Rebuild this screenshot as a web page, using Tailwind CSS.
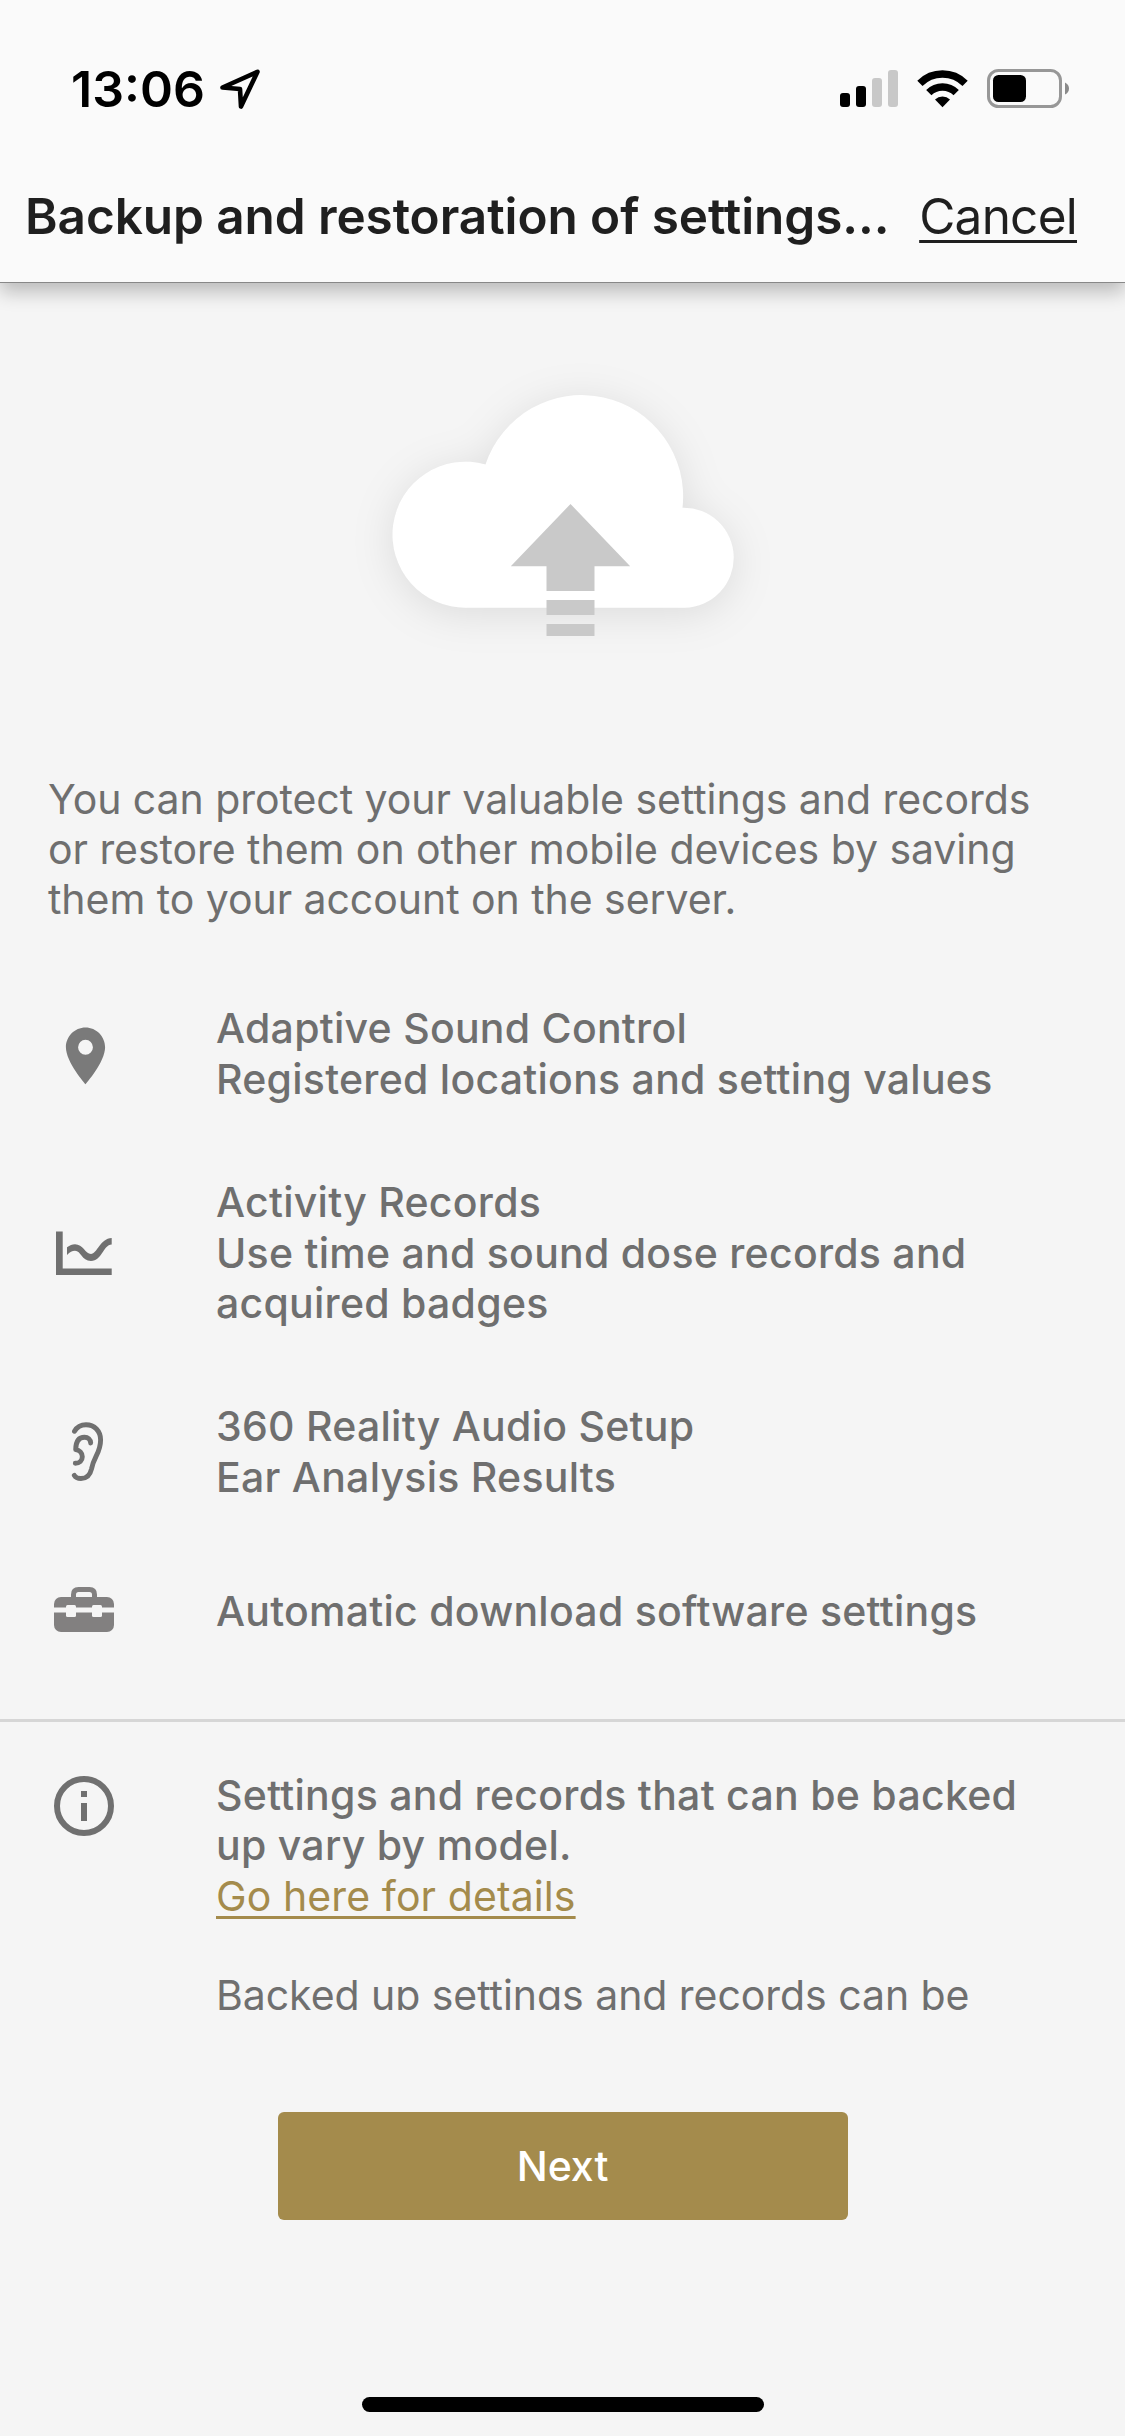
<!DOCTYPE html>
<html lang="en">
<head>
  <meta charset="UTF-8" />
  <meta name="viewport" content="width=device-width, initial-scale=1.0" />
  <title>Backup and restoration of settings</title>
  <!-- Tailwind CSS CDN -->
  <script src="https://cdn.jsdelivr.net/npm/@tailwindcss/browser@4"></script>
</head>
<body class="bg-[#f5f5f5] font-['Inter',sans-serif] text-[41px] leading-[50px] text-[#6f6f6f]">
  <div class="h-[2436px] w-[1125px] flex flex-col overflow-hidden">

    <!-- Header -->
    <header class="relative h-[283px] shrink-0 bg-[#fafafa] border-b border-[#888888] shadow-[0_9px_18px_rgba(0,0,0,0.24)]">
      <div class="h-[166px] pt-[58px] pl-[71px] pr-[54px] flex items-start justify-between text-black">
        <div class="flex items-center gap-[14px]">
          <span class="text-[50px] leading-[62px] font-semibold">13:06</span>
          <svg class="w-[42px] h-[42px]" viewBox="0 0 42 42" fill="none" stroke="currentColor" stroke-width="4.6" stroke-linejoin="round">
            <path d="M3.5 19.5L38.5 3.8L22 38.5L21 21Z" />
          </svg>
        </div>
        <div class="flex items-center gap-[19px] pt-[11px]">
          <!-- Signal -->
          <svg class="w-[58px] h-[39px]" viewBox="0 0 58 39">
            <rect x="0" y="24" width="10" height="14" rx="3" />
            <rect x="16" y="17" width="10" height="21" rx="3" />
            <rect x="32" y="9" width="10" height="29" rx="3" fill="#c8c8c8" />
            <rect x="48" y="1" width="10" height="37" rx="3" fill="#c8c8c8" />
          </svg>
          <!-- Wifi -->
          <svg class="w-[51px] h-[39px]" viewBox="0 0 51 39">
            <g fill="none" stroke="currentColor" stroke-width="7.4">
              <path d="M2.9 14.4A32 32 0 0 1 48.1 14.4" />
              <path d="M11.8 23.7A19.3 19.3 0 0 1 39.2 23.7" />
            </g>
            <path d="M18 30.6A10.8 10.8 0 0 1 33 30.6L25.5 38.2Z" />
          </svg>
          <!-- Battery -->
          <svg class="w-[84px] h-[39px]" viewBox="0 0 84 39">
            <rect x="1.5" y="1.5" width="72" height="36" rx="10" fill="none" stroke="#979797" stroke-width="3" />
            <rect x="6" y="6" width="33" height="27" rx="5.5" />
            <path d="M78 13.5Q82 15.5 82 19.5Q82 23.5 78 25.5Z" fill="#8a8a8a" />
          </svg>
        </div>
      </div>
      <div class="flex justify-between pl-[25px] pr-12 pt-[20px] text-[49.5px] leading-[60px] text-[#1f1f1f] whitespace-nowrap">
        <h1 class="font-semibold tracking-[-0.08px]">Backup and restoration of settings...</h1>
        <a class="underline decoration-[3px] underline-offset-[6px] tracking-[-0.75px]">Cancel</a>
      </div>
    </header>

    <!-- Scrolling content -->
    <main class="h-[1727px] shrink-0 overflow-hidden">
      <svg class="mx-auto mt-[57px] h-[360px] w-[450px]" viewBox="337.5 340 450 360">
        <g class="drop-shadow-[0_6px_20px_rgba(0,0,0,0.1)]" fill="#ffffff">
          <path d="M466 607.7A73 73 0 1 1 485 464.5A101.4 101.4 0 0 1 682 507.7A50 50 0 1 1 684.3 607.7Z" />
        </g>
        <g fill="#c9c9c9">
          <path d="M570 504L629.7 566.3H594V591H546V566.3H510.3Z" />
          <rect x="546" y="600" width="48" height="15" />
          <rect x="546" y="624" width="48" height="12" />
        </g>
      </svg>

      <div class="mt-[74px] px-12 whitespace-nowrap">
        <p class="tracking-[-0.05px]">You can protect your valuable settings and records<br>or restore them on other mobile devices by saving<br>them to your account on the server.</p>
      </div>

      <ul class="mt-[79px] flex flex-col gap-[73px] px-12 font-medium tracking-[0.26px] whitespace-nowrap">
        <li class="flex items-center gap-24">
          <svg class="size-[72px] shrink-0" viewBox="0 0 72 72" fill="#7a7a7a">
            <path transform="translate(3.9 3.8) scale(2.8 2.84)" d="M12 2C8.13 2 5 5.13 5 9c0 5.25 7 13 7 13s7-7.75 7-13c0-3.87-3.13-7-7-7zm0 9.6a2.65 2.65 0 1 1 0-5.3 2.65 2.65 0 0 1 0 5.3z" />
          </svg>
          <div>
            <p class="leading-[51px]">Adaptive Sound Control</p>
            <p>Registered locations and setting values</p>
          </div>
        </li>
        <li class="flex items-center gap-24">
          <svg class="size-[72px] shrink-0" viewBox="0 0 72 72" fill="#707070">
            <path d="M8 14.5H14.7V51.5H63.7V58H8Z" />
            <path d="M19 30.3C22 28.3 24 27.3 27 27.3C35 27.3 37.5 37 43 37C49 37 52 21.5 63.7 21V27.5C55 28 54 44 43 44C33.5 44 33 33.8 27 33.8C24 33.8 22 35 19 38Z" />
          </svg>
          <div>
            <p class="leading-[51px]">Activity Records</p>
            <p>Use time and sound dose records and<br>acquired badges</p>
          </div>
        </li>
        <li class="flex items-center gap-24">
          <svg class="size-[72px] shrink-0" viewBox="0 0 72 72" fill="none" stroke="#707070" stroke-width="4.9" stroke-linecap="round" stroke-linejoin="round">
            <path d="M26.5 15.3C29 11 33 8.8 38 8.8C46.5 8.8 52.6 15 52.6 24C52.6 37 46 40 43.5 53C42 59.5 38.5 62.5 33 62.5C30 62.5 27.5 61.5 26.3 59.3" />
            <path d="M42.7 27C42.5 23.5 40 21.3 36.5 21.3C31 21.3 27.8 25.5 27.7 33.6C31.5 34.2 34.3 36.8 34.3 40.7C34.3 44.8 31.5 47.3 27.3 47.3" />
          </svg>
          <div>
            <p class="leading-[51px]">360 Reality Audio Setup</p>
            <p>Ear Analysis Results</p>
          </div>
        </li>
        <li class="flex items-center gap-24">
          <svg class="size-[72px] shrink-0" viewBox="0 0 72 72" fill="#828080">
            <path d="M25.5 24V19.5Q25.5 14.5 30.5 14.5H41.5Q46.5 14.5 46.5 19.5V24" fill="none" stroke="#828080" stroke-width="5" />
            <rect x="6" y="22" width="60" height="35" rx="7" />
            <g fill="#f5f5f5">
              <rect x="6" y="32.5" width="60" height="5" />
              <rect x="18" y="30" width="10" height="12" rx="1.5" />
              <rect x="44" y="30" width="10" height="12" rx="1.5" />
            </g>
          </svg>
          <p>Automatic download software settings</p>
        </li>
      </ul>

      <hr class="mt-[72px] border-t-[3px] border-[#d6d6d6]" />

      <div class="mt-12 px-12 flex items-start gap-24 whitespace-nowrap">
        <svg class="size-[72px] shrink-0" viewBox="0 0 72 72" fill="#707070">
          <circle cx="36" cy="36" r="27" fill="none" stroke="#707070" stroke-width="6" />
          <rect x="33" y="21" width="6" height="6" />
          <rect x="33" y="33" width="6" height="18" />
        </svg>
        <div>
          <p class="font-medium tracking-[0.28px]">Settings and records that can be backed<br>up vary by model.</p>
          <a class="block leading-[52px] tracking-[0.1px] text-[#a48b4c] underline decoration-[3px] underline-offset-[5px]">Go here for details</a>
          <p class="mt-[48px] tracking-[-0.05px]">Backed up settings and records can be</p>
        </div>
      </div>
    </main>

    <!-- Bottom action -->
    <button class="mt-[102px] mx-auto h-[108px] w-[570px] shrink-0 rounded-[6px] bg-[#a48b4c] font-medium text-white">Next</button>
    <div class="mt-[177px] mx-auto h-[15px] w-[402px] shrink-0 rounded-full bg-black"></div>
  </div>
</body>
</html>
